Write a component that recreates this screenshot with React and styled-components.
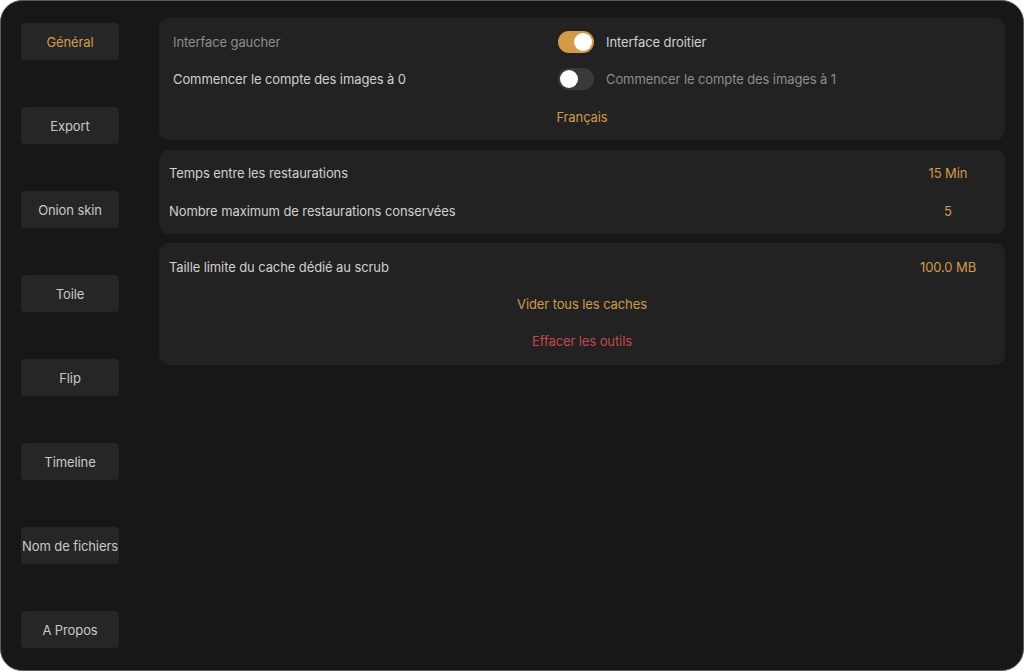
import React from "react";
import styled, { createGlobalStyle } from "styled-components";

const Global = createGlobalStyle`
  html, body { margin: 0; padding: 0; background: #ffffff; }
  body { font-family: Inter, "Noto Sans", sans-serif; letter-spacing: -0.1px; -webkit-font-smoothing: antialiased; }
  * { box-sizing: border-box; }
`;

const Frame = styled.div`
  width: 1024px;
  height: 671px;
  background: #171717;
  border: 1px solid #5c5c5c;
  border-radius: 22px;
  display: flex;
  overflow: hidden;
`;

const Sidebar = styled.nav`
  display: flex;
  flex-direction: column;
  gap: 47px;
  padding: 22px 0 0 20px;
`;

const NavButton = styled.div`
  width: 98px;
  height: 37px;
  border-radius: 4px;
  background: #262626;
  color: ${(p) => (p.$active ? "#d39b48" : "#c9c9c9")};
  font-size: 13px;
  display: flex;
  align-items: center;
  justify-content: center;
  white-space: nowrap;
`;

const Content = styled.main`
  flex: 1;
  display: flex;
  flex-direction: column;
  gap: 10px;
  padding: 17px 18px 0 40px;
`;

const Panel = styled.section`
  background: #222222;
  border-radius: 10px;
  padding: ${(p) => p.$pad || "5px 0"};
  margin-top: ${(p) => p.$shift || 0}px;
  display: flex;
  flex-direction: column;
`;

const Row = styled.div`
  height: ${(p) => p.$h || 37.5}px;
  display: flex;
  align-items: center;
  font-size: 13px;
`;

const LeftCell = styled.div`
  width: 399px;
  padding-left: 14px;
  color: ${(p) => (p.$dim ? "#8d8d8d" : "#d0d0d0")};
`;

const ToggleCell = styled.div`
  display: flex;
  align-items: center;
  gap: 12px;
  color: ${(p) => (p.$dim ? "#8d8d8d" : "#d0d0d0")};
`;

const Track = styled.div`
  width: 36px;
  height: 22px;
  border-radius: 11px;
  background: ${(p) => (p.$on ? "#d39b48" : "#3a3a3c")};
  position: relative;
  flex-shrink: 0;
`;

const Knob = styled.div`
  position: absolute;
  top: 2px;
  left: ${(p) => (p.$on ? "16px" : "2px")};
  width: 18px;
  height: 18px;
  border-radius: 50%;
  background: #ffffff;
`;

const CenterAction = styled.div`
  flex: 1;
  text-align: center;
  color: ${(p) => (p.$danger ? "#c8454f" : "#d39b48")};
`;

const Label = styled.div`
  flex: 1;
  padding-left: 10px;
  color: #d0d0d0;
`;

const Value = styled.div`
  width: 100px;
  margin-right: 7px;
  text-align: center;
  color: #d39b48;
`;

const Toggle = ({ on }) => (
  <Track $on={on}>
    <Knob $on={on} />
  </Track>
);

const navItems = [
  "Général",
  "Export",
  "Onion skin",
  "Toile",
  "Flip",
  "Timeline",
  "Nom de fichiers",
  "A Propos",
];

export default function App() {
  return (
    <>
      <Global />
      <Frame>
        <Sidebar>
          {navItems.map((n, i) => (
            <NavButton key={n} $active={i === 0}>
              {n}
            </NavButton>
          ))}
        </Sidebar>
        <Content>
          <Panel>
            <Row>
              <LeftCell $dim>Interface gaucher</LeftCell>
              <ToggleCell>
                <Toggle on />
                Interface droitier
              </ToggleCell>
            </Row>
            <Row>
              <LeftCell>Commencer le compte des images à 0</LeftCell>
              <ToggleCell $dim>
                <Toggle />
                Commencer le compte des images à 1
              </ToggleCell>
            </Row>
            <Row $h={37}>
              <CenterAction>Français</CenterAction>
            </Row>
          </Panel>
          <Panel $pad="4px 0">
            <Row $h={38}>
              <Label>Temps entre les restaurations</Label>
              <Value>15 Min</Value>
            </Row>
            <Row $h={38}>
              <Label>Nombre maximum de restaurations conservées</Label>
              <Value>5</Value>
            </Row>
          </Panel>
          <Panel $pad="5px 0 6px" $shift={-1}>
            <Row $h={37}>
              <Label>Taille limite du cache dédié au scrub</Label>
              <Value>100.0 MB</Value>
            </Row>
            <Row $h={37}>
              <CenterAction>Vider tous les caches</CenterAction>
            </Row>
            <Row $h={37}>
              <CenterAction $danger>Effacer les outils</CenterAction>
            </Row>
          </Panel>
        </Content>
      </Frame>
    </>
  );
}
